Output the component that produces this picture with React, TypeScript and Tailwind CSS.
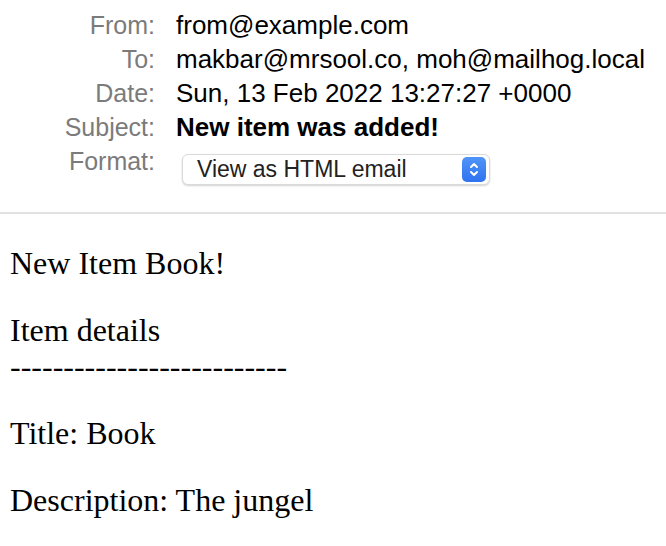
const headers = [
    { label: "From:", value: "from@example.com" },
    { label: "To:", value: "makbar@mrsool.co, moh@mailhog.local" },
    { label: "Date:", value: "Sun, 13 Feb 2022 13:27:27 +0000" },
    { label: "Subject:", value: "New item was added!", bold: true },
]

function Stepper() {
    return (
        <div className="w-[24px] h-[25px] rounded-[5px] bg-gradient-to-b from-[#4f95f8] to-[#2f72ef] flex items-center justify-center">
            <svg width="12" height="17" viewBox="0 0 12 17" fill="none" stroke="white" strokeWidth="2" strokeLinecap="round" strokeLinejoin="round">
                <path d="M3 6 L6 3 L9 6" />
                <path d="M3 11 L6 14 L9 11" />
            </svg>
        </div>
    )
}

export default function App() {
    return (
        <div className="min-h-screen bg-white text-black">
            <div className="pt-[8px] pb-[27px] font-['Liberation_Sans',Arial,sans-serif] text-[26px]">
                {headers.map(h => (
                    <div key={h.label} className="flex h-[34px] leading-[34px]">
                        <div className="w-[155px] text-right text-[#7b7b7b] text-[25px]">{h.label}</div>
                        <div className={`ml-[21px] whitespace-nowrap ${h.bold ? "font-bold" : ""}`}>{h.value}</div>
                    </div>
                ))}
                <div className="flex">
                    <div className="w-[155px] h-[34px] leading-[34px] text-right text-[#7b7b7b] text-[25px]">Format:</div>
                    <div className="ml-[27px] mt-[10px] w-[308px] h-[31px] rounded-[6px] border border-[#dadada] bg-white shadow-[0_1px_2px_rgba(0,0,0,0.18)] flex items-center justify-between pl-[14px] pr-[3px]">
                        <span className="text-[23px] leading-none text-[#222]">View as HTML email</span>
                        <Stepper />
                    </div>
                </div>
            </div>
            <div className="h-[2px] bg-[#e1e1e1]" />
            <div className="px-[10px] font-['Liberation_Serif','Times_New_Roman',serif] text-[32px] leading-[36px]">
                <p className="mt-[31px]">New Item Book!</p>
                <p className="mt-[31px]">
                    Item details
                    <br />
                    --------------------------
                </p>
                <p className="mt-[31px]">Title: Book</p>
                <p className="mt-[31px]">Description: The jungel</p>
            </div>
        </div>
    )
}
